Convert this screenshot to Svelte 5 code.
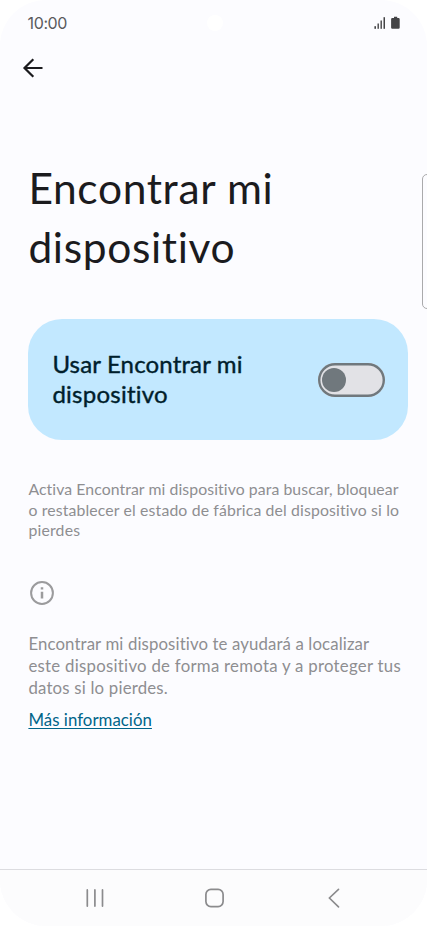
<script>
  const title = [
    { text: 'Encontrar mi', spacing: 0.65 },
    { text: 'dispositivo', spacing: 0.65 }
  ];
  const label = [
    { text: 'Usar Encontrar mi', spacing: 0.15 },
    { text: 'dispositivo', spacing: 0.25 }
  ];
  const summary = [
    { text: 'Activa Encontrar mi dispositivo para buscar, bloquear', spacing: 0.08 },
    { text: 'o restablecer el estado de fábrica del dispositivo si lo', spacing: 0.14 },
    { text: 'pierdes', spacing: 0.2 }
  ];
  const details = [
    { text: 'Encontrar mi dispositivo te ayudará a localizar', spacing: 0.12 },
    { text: 'este dispositivo de forma remota y a proteger tus', spacing: 0.27 },
    { text: 'datos si lo pierdes.', spacing: 0.2 }
  ];
  let enabled = $state(false);
</script>

{#snippet lines(items)}
  {#each items as line}
    <span class="line" style="letter-spacing: {line.spacing}px">{line.text}</span>
  {/each}
{/snippet}

<div class="phone">
  <header class="status">
    <span class="time">10:00</span>
    <i class="camera"></i>
    <svg width="28" height="14" viewBox="0 0 28 14" fill="#444446">
      <rect x="0.4" y="10.2" width="1.6" height="2.6" />
      <rect x="3.5" y="7.5" width="1.4" height="5.3" />
      <rect x="6.5" y="4.5" width="1.4" height="8.3" />
      <rect x="9.500" y="1.2" width="1.5" height="11.6" />
      <path d="M20 0.7h3.200v1.300h1.300q1.200 0 1.200 1.200v8.400q0 1.200-1.200 1.200h-6.200q-1.200 0-1.200-1.200V3.200q0-1.200 1.200-1.200H20z" />
    </svg>
  </header>

  <button class="back" aria-label="Atrás">
    <svg width="22" height="22" viewBox="0 0 22 22" fill="none" stroke="#1b1b1e" stroke-width="2.2">
      <path d="M20.500 11H3M11.300 2.200L2.500 11l8.800 8.800" />
    </svg>
  </button>

  <main>
    <h1>{@render lines(title)}</h1>

    <section class="card">
      <div class="label">{@render lines(label)}</div>
      <button class="switch" class:on={enabled} role="switch" aria-checked={enabled} aria-label="Usar Encontrar mi dispositivo" onclick={() => (enabled = !enabled)}>
        <i class="knob"></i>
      </button>
    </section>

    <p class="summary">{@render lines(summary)}</p>

    <svg class="info" width="26" height="26" viewBox="0 0 26 26" fill="none" stroke="#9b9b9d" stroke-width="2">
      <circle cx="13" cy="13" r="10.900" />
      <path d="M13 11.800v6.800M13 7.200v2.400" stroke-width="2.500" />
    </svg>

    <p class="details">{@render lines(details)}</p>
    <a href="#info">Más información</a>
  </main>

  <i class="edge"></i>

  <nav>
    <svg width="20" height="20" viewBox="0 0 20 20" fill="none" stroke="#8b8b8d" stroke-width="1.700" stroke-linecap="round">
      <path d="M2.300 1.900v16.200M9.900 1.900v16.200M17.500 1.900v16.200" />
    </svg>
    <svg width="20" height="20" viewBox="0 0 20 20" fill="none" stroke="#8b8b8d" stroke-width="1.700">
      <rect x="0.900" y="1.400" width="17.200" height="17.200" rx="5" />
    </svg>
    <svg width="20" height="20" viewBox="0 0 20 20" fill="none" stroke="#8b8b8d" stroke-width="1.600" stroke-linecap="round">
      <path d="M14.500 1.400L5.400 10l9.100 8.900" />
    </svg>
  </nav>
</div>

<style>
  :global(body) { margin: 0; background: #fff; }
  .phone {
    position: relative;
    display: flex;
    flex-direction: column;
    width: 427px;
    height: 926px;
    overflow: hidden;
    border-radius: 46px;
    background: #fcfcff;
    font-family: Lato, "Noto Sans", sans-serif;
    font-variant-ligatures: none;
  }
  button { padding: 0; border: 0; background: none; }
  .status {
    display: grid;
    grid-template-columns: 1fr 16px 1fr;
    align-items: center;
    box-sizing: border-box;
    height: 46px;
    padding: 0 25px 0 27px;
  }
  .status svg { justify-self: end; }
  .time { padding-left: 0.600px; font: 16px/20px Inter, sans-serif; color: #5a5a5c; letter-spacing: -0.4px; }
  .camera { width: 16px; height: 16px; border-radius: 50%; background: #fff; }
  .back { display: block; width: 22px; height: 22px; margin: 10.5px 0 0 22px; }
  .back svg { display: block; }
  main { flex: 1; padding: 78.5px 19px 0 28.4px; }
  .line { display: block; width: max-content; white-space: nowrap; }
  h1 { margin: 0; font-size: 42.5px; line-height: 59px; font-weight: 400; color: #1b1b1e; }
  h1 .line { position: relative; top: 1px; }
  .card {
    display: flex;
    align-items: center;
    justify-content: space-between;
    box-sizing: border-box;
    height: 121px;
    margin-top: 44px;
    padding: 0 23.5px 2px 24px;
    border-radius: 34px;
    background: #c2e8ff;
  }
  .label { font-size: 24px; line-height: 30px; color: #001e2c; -webkit-text-stroke: 0.4px #001e2c; }
  .switch {
    display: flex;
    align-items: center;
    box-sizing: border-box;
    width: 67px;
    height: 34px;
    margin-top: 2px;
    padding-left: 4px;
    border-radius: 17px;
    background: #e2e2e6;
    box-shadow: inset 0 0 0 2.400px #70787d;
  }
  .knob { width: 24px; height: 24px; border-radius: 50%; background: #70787d; }
  .on .knob { margin-left: 35px; }
  p { margin: 0; color: #8e8e91; }
  .summary { margin-top: 39px; font-size: 15.8px; line-height: 20.7px; }
  .info { display: block; margin: 39px 0 0 1px; }
  .details { margin-top: 27px; font-size: 16.8px; line-height: 22px; }
  a {
    display: block;
    width: max-content;
    margin-top: 10px;
    font-size: 16.8px;
    line-height: 22px;
    letter-spacing: 0.05px;
    color: #00658a;
    text-decoration-thickness: 1.3px;
    text-underline-offset: 2px;
  }
  .edge {
    position: absolute;
    top: 173.5px;
    right: -9px;
    width: 12px;
    height: 133px;
    border: 1px solid #aaaaac;
    border-radius: 5px;
  }
  nav {
    display: flex;
    align-items: center;
    justify-content: space-between;
    box-sizing: border-box;
    height: 57px;
    padding: 0 83px 0 85px;
    border-top: 1px solid #dcdce0;
    background: #fcfcfd;
  }
</style>
